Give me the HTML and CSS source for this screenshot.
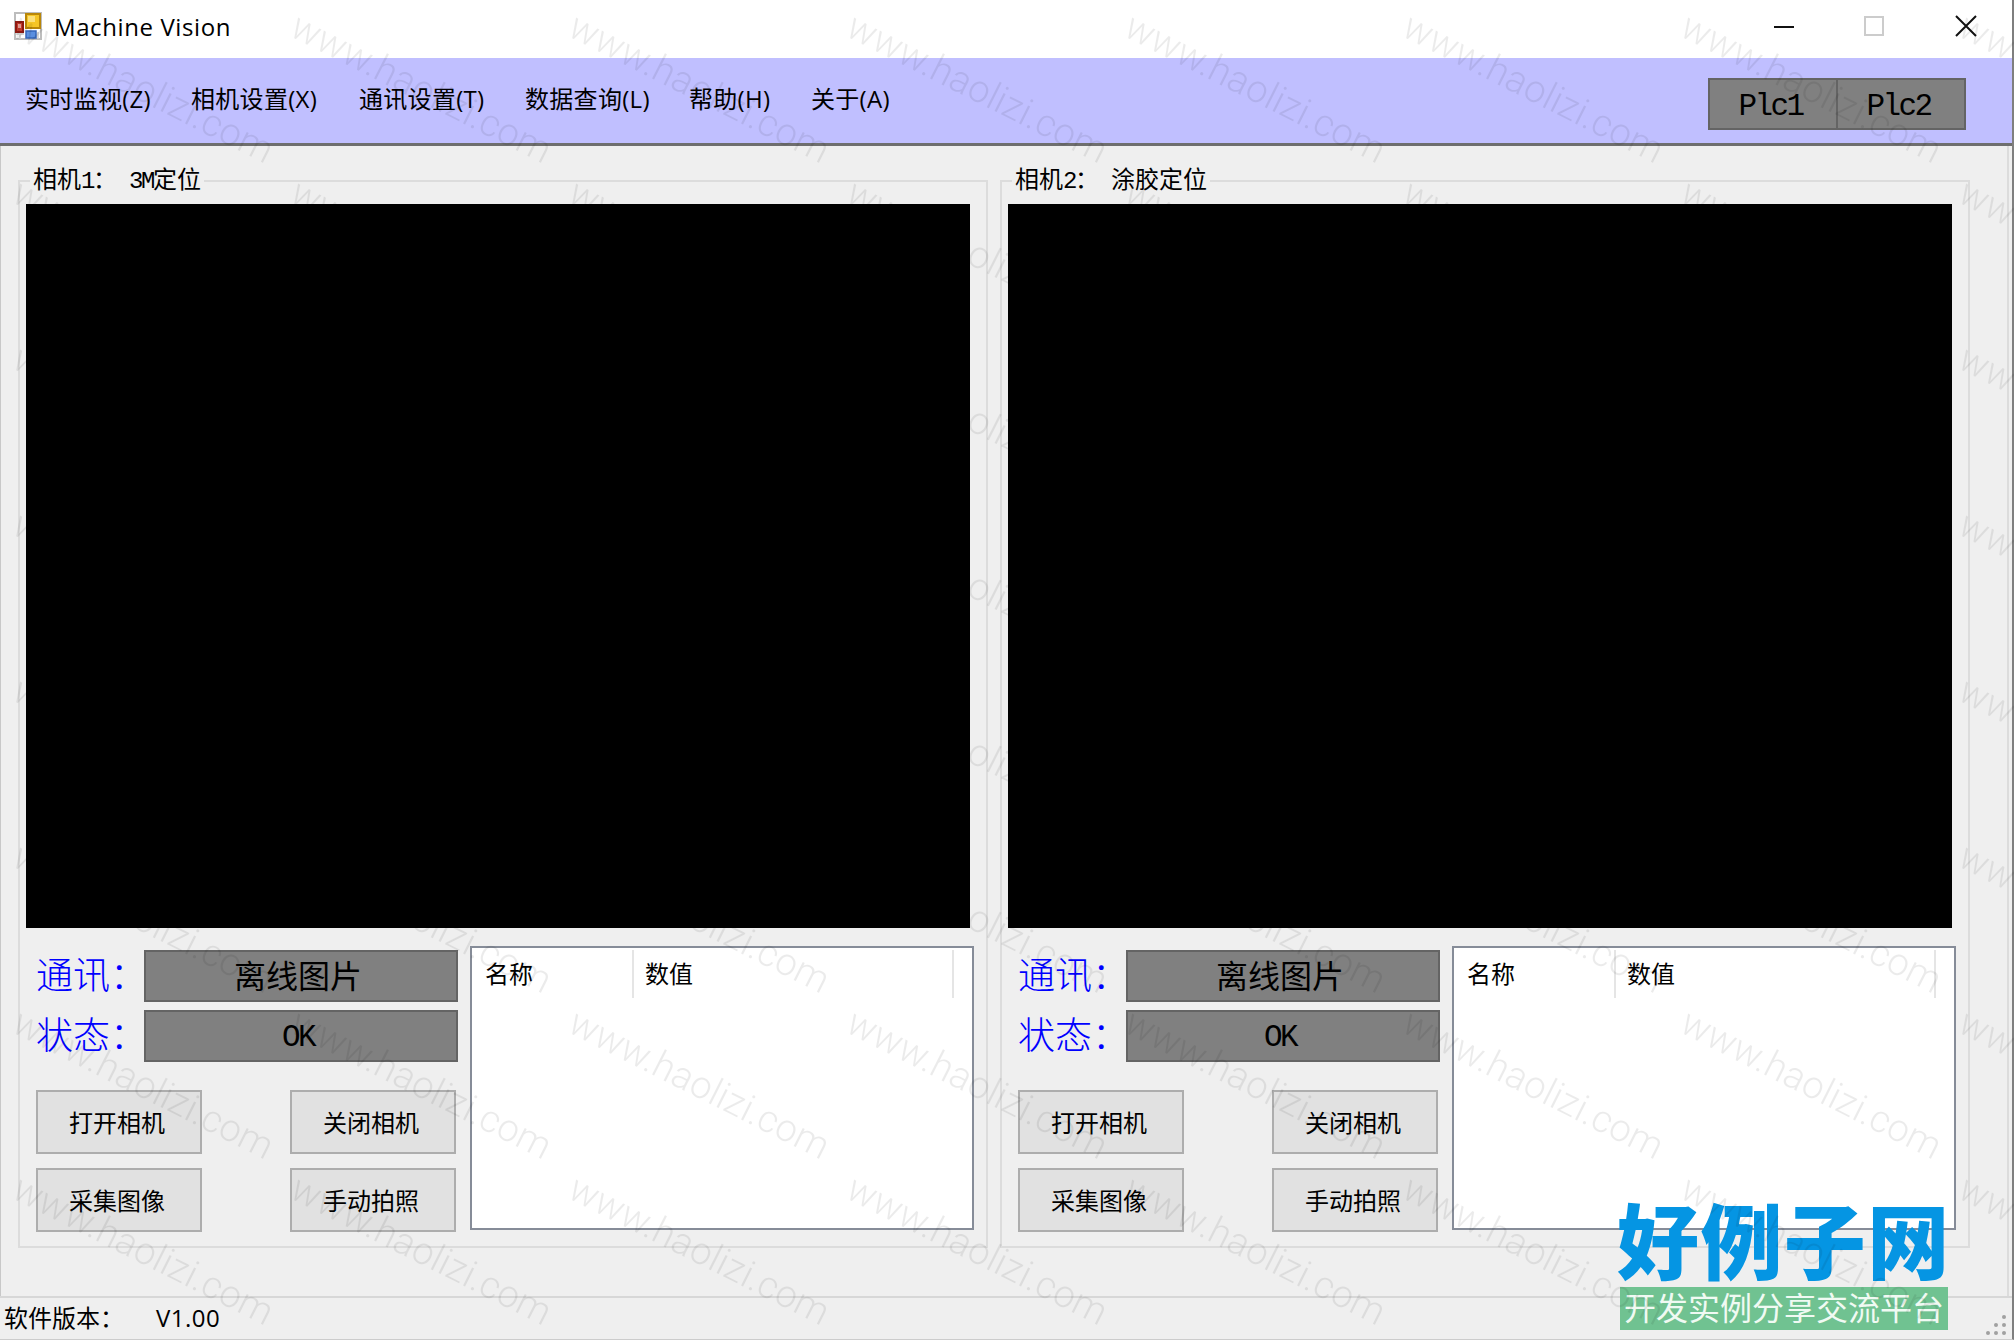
FILE: index.html
```
<!DOCTYPE html>
<html lang="zh-CN">
<head>
	<meta charset="utf-8">
	<title>Machine Vision</title>
	<link rel="stylesheet" href="styles.css">
</head>

<body>
<div class="window">
	<div class="titlebar">
		<svg class="appicon" width="28" height="28" viewBox="0 0 28 28">
			<rect x="1" y="1" width="26" height="26" fill="#fff" stroke="#bdbdbd" stroke-width="2"/>
			<path d="M6 20v7M2 22h8M24 20v7" stroke="#ccc" stroke-width="1.5"/>
			<rect x="12" y="2" width="14" height="14" fill="#f5c526" stroke="#b98709" stroke-width="2"/>
			<rect x="14" y="4" width="7" height="6" fill="#fbe07c"/>
			<rect x="2" y="10" width="7" height="10" fill="#c23a2b" stroke="#8e1a12" stroke-width="2"/>
			<rect x="4" y="12" width="3" height="4" fill="#eba49b"/>
			<rect x="12" y="19" width="10" height="7" fill="#5a8fe0" stroke="#3566ba" stroke-width="1.5"/>
		</svg>
		<span class="title">Machine Vision</span>
		<svg class="winbtns" width="204" height="24" viewBox="0 0 204 24" fill="none">
			<path d="M0 13h20" stroke="#111" stroke-width="2"/>
			<rect x="91" y="3" width="18" height="18" stroke="#ccc" stroke-width="2"/>
			<path d="M182 2l20 20M202 2l-20 20" stroke="#111" stroke-width="2"/>
		</svg>
	</div>

	<div class="menubar">
		<span class="m1">实时监视(Z)</span>
		<span class="m2">相机设置(X)</span>
		<span class="m3">通讯设置(T)</span>
		<span class="m4">数据查询(L)</span>
		<span class="m5">帮助(H)</span>
		<span class="m6">关于(A)</span>
		<div class="plc"><div>Plc1</div><div>Plc2</div></div>
	</div>

	<div class="main">
		<fieldset>
			<legend>相机<tt>1</tt>：<tt>&nbsp;3M</tt>定位</legend>
			<div class="view"></div>
			<div class="bottom">
				<div class="controls">
					<div class="row"><label>通讯：</label><div class="state">离线图片</div></div>
					<div class="row"><label>状态：</label><div class="state ok">OK</div></div>
					<div class="buttons">
						<button>打开相机</button>
						<button>关闭相机</button>
						<button>采集图像</button>
						<button>手动拍照</button>
					</div>
				</div>
				<div class="list">
					<div class="head name">名称</div>
					<div class="head value">数值</div>
				</div>
			</div>
		</fieldset>

		<fieldset>
			<legend>相机<tt>2</tt>：<tt>&nbsp;</tt>涂胶定位</legend>
			<div class="view"></div>
			<div class="bottom">
				<div class="controls">
					<div class="row"><label>通讯：</label><div class="state">离线图片</div></div>
					<div class="row"><label>状态：</label><div class="state ok">OK</div></div>
					<div class="buttons">
						<button>打开相机</button>
						<button>关闭相机</button>
						<button>采集图像</button>
						<button>手动拍照</button>
					</div>
				</div>
				<div class="list">
					<div class="head name">名称</div>
					<div class="head value">数值</div>
				</div>
			</div>
		</fieldset>
	</div>

	<div class="statusbar">
		<span class="label">软件版本：</span>
		<span class="version">V1.00</span>
		<svg class="grip" width="20" height="20" viewBox="0 0 20 20" fill="#a0a0a0">
			<circle cx="18" cy="2" r="2"/>
			<circle cx="10" cy="10" r="2"/><circle cx="18" cy="10" r="2"/>
			<circle cx="2" cy="18" r="2"/><circle cx="10" cy="18" r="2"/><circle cx="18" cy="18" r="2"/>
		</svg>
	</div>
</div>

<!-- site logo -->
<div class="logo">
	<div class="site">好例子网</div>
	<div class="slogan">开发实例分享交流平台</div>
</div>

<!-- tiled watermark -->
<svg class="watermark" width="2014" height="1340">
	<defs>
		<pattern id="wm" x="5" y="8" width="278" height="166" patternUnits="userSpaceOnUse">
			<text transform="translate(5 27) rotate(26.8)" textLength="286">www.haolizi.com</text>
		</pattern>
	</defs>
	<rect width="2014" height="1340" fill="url(#wm)"/>
</svg>
</body>
</html>
```

FILE: styles.css
```
* {box-sizing: border-box}
body {margin: 0; background: #efefef; color: #000; font: 24px/24px "Noto Sans CJK SC", sans-serif;}
.window {position: relative; width: 2014px; height: 1340px; display: flex; flex-direction: column; border-right: 2px solid #7f7f7f; border-bottom: 1px solid #ccc; overflow: hidden;}

.titlebar {height: 58px; flex: none; display: flex; align-items: center; background: #fff; padding: 0 34px 6px 14px;}
.title {margin-left: 12px; font: 24px/30px "Open Sans", sans-serif; letter-spacing: 0.6px; padding-top: 1px;}
.winbtns {margin-left: auto;}

.menubar {height: 88px; flex: none; display: flex; background: #c0bfff; border-bottom: 3px solid #6e6e6e; padding: 20px 46px 0 25px; font-family: "Open Sans", "Noto Sans CJK SC", sans-serif; line-height: 42px; letter-spacing: 0.3px;}
.menubar span {white-space: nowrap;}
.m1 {width: 166px;}
.m2 {width: 168px;}
.m3 {width: 166px;}
.m4 {width: 164px;}
.m5 {width: 122px;}
.plc {margin-left: auto; width: 258px; height: 52px; display: flex; background: #808080; border: 2px solid #646464; font: 31px/54px "Liberation Mono", monospace; letter-spacing: -2.6px; text-align: center;}
.plc div {flex: 1; padding-right: 5px;}
.plc div + div {border-left: 2px solid #646464;}

.main {height: 1150px; flex: none; display: flex; gap: 12px; padding: 20px 0 0 17px; margin-right: 3px; border-left: 1px solid #c8c8c8; border-right: 2px solid #dcdcdc;}
fieldset {margin: 0; width: 970px; height: 1082px; flex: none; padding: 8px 0 0 6px; border: 2px solid #dcdcdc;}
legend {margin-left: 4px; height: 30px; padding: 0 3px 6px; line-height: 23px; white-space: nowrap;}
tt {font: 24px/23px "Liberation Mono", monospace; letter-spacing: -2.4px;}
.view {width: 944px; height: 724px; background: #000;}
.bottom {display: flex; margin-top: 18px;}
.controls {width: 444px; padding: 4px 12px 0 10px;}
.row {display: flex; height: 52px; margin-bottom: 8px;}
.row label {width: 108px; color: #00f; font-size: 37px; font-weight: 300; line-height: 46px; white-space: nowrap;}
.state {width: 314px; background: #808080; border: 2px solid #646464; font-size: 32px; line-height: 45px; text-align: center; padding-right: 6px;}
.ok {font: 31px/51px "Liberation Mono", monospace; letter-spacing: -2.6px;}
.buttons {display: grid; grid-template-columns: 166px 166px; column-gap: 88px; row-gap: 14px; margin-top: 28px;}
button {height: 64px; padding: 0 4px 1px 0; background: #e1e1e1; border: 2px solid #adadad; color: #000; font: 24px/24px "Noto Sans CJK SC", sans-serif;}
.list {width: 504px; height: 284px; display: flex; background: #fff; border: 2px solid #868c98; padding-top: 2px;}
.head {height: 48px; line-height: 46px; border-right: 2px solid #e5e5e5;}
.name {width: 162px; padding-left: 13px;}
.value {width: 320px; padding-left: 11px;}

.statusbar {flex: 1; display: flex; align-items: center; border-top: 2px solid #d7d7d7; padding: 0 6px 2px 4px; font-family: "Open Sans", "Noto Sans CJK SC", sans-serif;}
.statusbar .label {width: 152px; white-space: nowrap;}
.version {letter-spacing: 0.5px;}
.grip {margin-left: auto; margin-top: 14px;}

.logo {position: absolute; left: 1620px; top: 1200px; width: 328px;}
.site {height: 87px; margin-left: -3px; color: #0595e3; font-size: 82px; font-weight: 900; line-height: 75px; letter-spacing: 1.4px; white-space: nowrap;}
.slogan {height: 43px; background: #70c291; color: #f0faf3; font-size: 32px; line-height: 38px; padding-left: 4px; white-space: nowrap;}
.watermark {position: absolute; left: 0; top: 0;}
.watermark text {font-family: Roboto, "Liberation Sans", sans-serif; font-size: 38px; font-weight: 300; fill: #000; fill-opacity: 0.08;}
```
